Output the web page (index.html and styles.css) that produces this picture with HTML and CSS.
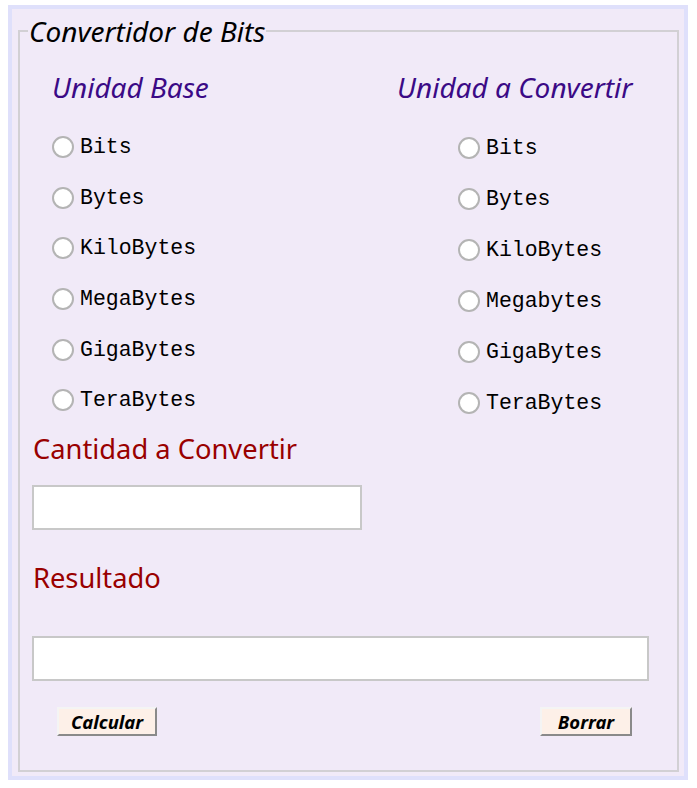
FILE: index.html
```html
<!DOCTYPE html>
<html lang="es">
<head>
<meta charset="utf-8">
<title>Convertidor de Bits</title>
<link rel="stylesheet" href="styles.css">
</head>
<body>
<div class="frame">
  <fieldset class="box">
    <legend class="title">Convertidor de Bits</legend>
    <div class="units">
      <div class="col col-left">
        <h2 class="col-title">Unidad Base</h2>
        <label class="opt"><input type="radio" name="base"><span>Bits</span></label>
        <label class="opt"><input type="radio" name="base"><span>Bytes</span></label>
        <label class="opt"><input type="radio" name="base"><span>KiloBytes</span></label>
        <label class="opt"><input type="radio" name="base"><span>MegaBytes</span></label>
        <label class="opt"><input type="radio" name="base"><span>GigaBytes</span></label>
        <label class="opt"><input type="radio" name="base"><span>TeraBytes</span></label>
      </div>
      <div class="col col-right">
        <h2 class="col-title">Unidad a Convertir</h2>
        <div class="opts-right">
          <label class="opt"><input type="radio" name="dest"><span>Bits</span></label>
          <label class="opt"><input type="radio" name="dest"><span>Bytes</span></label>
          <label class="opt"><input type="radio" name="dest"><span>KiloBytes</span></label>
          <label class="opt"><input type="radio" name="dest"><span>Megabytes</span></label>
          <label class="opt"><input type="radio" name="dest"><span>GigaBytes</span></label>
          <label class="opt"><input type="radio" name="dest"><span>TeraBytes</span></label>
        </div>
      </div>
    </div>
    <h3 class="field-title">Cantidad a Convertir</h3>
    <input class="field field-amount" type="text">
    <h3 class="field-title field-title-result">Resultado</h3>
    <input class="field field-result" type="text">
    <div class="actions">
      <button class="btn btn-calc" type="button">Calcular</button>
      <button class="btn btn-clear" type="button">Borrar</button>
    </div>
  </fieldset>
</div>
</body>
</html>
```
FILE: styles.css
```css
html, body {
  margin: 0;
  padding: 0;
  background: #ffffff;
}
body {
  padding: 5px 9px 0 8px;
  font-family: "Noto Sans", "Open Sans", sans-serif;
}
.frame {
  width: 680px;
  box-sizing: border-box;
  border: 4px solid #dfe0fb;
  background: #f1eaf8;
  padding: 3px 5px 4px 6px;
}
.box {
  margin: 0;
  border: 2px solid #d2d0d4;
  padding: 0 12px 34px 12px;
  min-width: 0;
}
.title {
  font-style: italic;
  font-size: 28px;
  line-height: 38px;
  color: #000;
  padding: 0 1px;
  margin-left: -4px;
}
.units {
  display: grid;
  grid-template-columns: 365px 1fr;
  margin-top: 18px;
}
.col-left {
  padding-left: 20px;
}
.col-title {
  margin: 0 0 16px 0;
  font-size: 28px;
  line-height: 38px;
  font-style: italic;
  font-weight: normal;
  color: #3b0a86;
}
.opts-right {
  padding-left: 61px;
}
.opt {
  display: flex;
  align-items: center;
  height: 50.6px;
  font-family: "Liberation Mono", "Courier New", monospace;
  font-size: 21.5px;
  color: #000;
}
.opts-right .opt {
  height: 51px;
}
.opt input {
  appearance: none;
  -webkit-appearance: none;
  width: 22px;
  height: 22px;
  margin: 0 6px 0 0;
  border: 2px solid #b4b4b4;
  border-radius: 50%;
  background: #ffffff;
  box-sizing: border-box;
  flex: none;
}
.field-title {
  margin: 2px 0 0 1px;
  font-size: 27.3px;
  line-height: 37px;
  font-weight: normal;
  color: #990000;
}
.field {
  display: block;
  box-sizing: border-box;
  height: 45px;
  border: 2px solid #c8c8c8;
  background: #ffffff;
  margin: 18px 0 0 0;
  padding: 0 6px;
  font-size: 18px;
}
.field-amount {
  width: 330px;
}
.field-title-result {
  margin-top: 29px;
}
.field-result {
  width: 617px;
  margin-top: 40px;
}
.actions {
  display: flex;
  justify-content: space-between;
  margin-top: 26px;
  padding: 0 33px 0 25px;
}
.btn {
  font-family: "Noto Sans", "Open Sans", sans-serif;
  font-weight: bold;
  font-style: italic;
  font-size: 18.5px;
  line-height: 22px;
  height: 29px;
  padding: 0;
  color: #000;
  background: #fdf0e8;
  border: 2px solid;
  border-color: #f4f4f4 #8a8a8a #8a8a8a #f4f4f4;
}
.btn-calc {
  width: 100px;
}
.btn-clear {
  width: 92px;
}
```
